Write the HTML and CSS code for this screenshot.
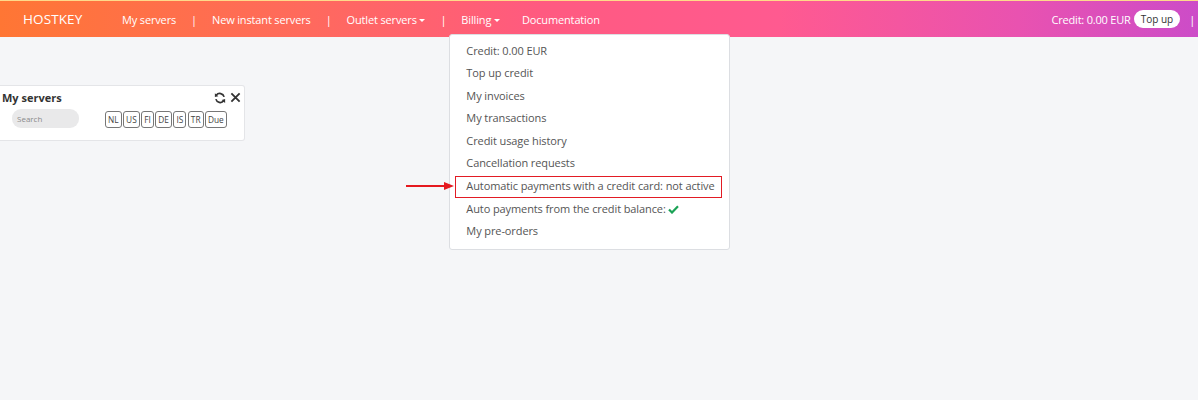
FILE: index.html
```html
<!DOCTYPE html>
<html>
<head>
<meta charset="utf-8">
<link rel="stylesheet" href="styles.css">
</head>
<body>
<header class="navbar">
  <div class="brand">HOSTKEY</div>
  <nav class="nav">
    <span class="nav-item">My servers</span>
    <span class="sep">|</span>
    <span class="nav-item">New instant servers</span>
    <span class="sep">|</span>
    <span class="nav-item">Outlet servers <span class="caret"></span></span>
    <span class="sep">|</span>
    <span class="nav-item billing">Billing <span class="caret"></span>
      <div class="dropdown">
        <div class="dd-item">Credit: 0.00 EUR</div>
        <div class="dd-item">Top up credit</div>
        <div class="dd-item">My invoices</div>
        <div class="dd-item">My transactions</div>
        <div class="dd-item">Credit usage history</div>
        <div class="dd-item">Cancellation requests</div>
        <div class="dd-item highlighted">Automatic payments with a credit card: not active
          <svg class="arrow" width="50" height="10" viewBox="0 0 50 10"><line x1="0" y1="5" x2="40" y2="5" stroke="#e5191f" stroke-width="2"/><polygon points="38,1 48,5 38,9" fill="#e5191f"/></svg>
        </div>
        <div class="dd-item">Auto payments from the credit balance: <svg class="check" width="11" height="9" viewBox="0 0 11 9"><path d="M1 4.5 L4 7.5 L10 1.2" fill="none" stroke="#1aa255" stroke-width="2.2"/></svg></div>
        <div class="dd-item">My pre-orders</div>
      </div>
    </span>
    <span class="nav-item doc">Documentation</span>
  </nav>
  <div class="right">
    <span class="credit">Credit: 0.00 EUR</span>
    <span class="topup">Top up</span>
    <span class="sep-r">|</span>
  </div>
</header>
<main class="content">
  <section class="widget">
    <div class="widget-head">
      <span class="widget-title">My servers</span>
      <span class="widget-icons">
        <svg width="12" height="12" viewBox="0 0 16 16"><path d="M13.5 6.5A6 6 0 0 0 3 4.2" fill="none" stroke="#333" stroke-width="2.2"/><polygon points="1.2,1.5 5.8,5.5 1.2,6.8" fill="#333"/><path d="M2.5 9.5A6 6 0 0 0 13 11.8" fill="none" stroke="#333" stroke-width="2.2"/><polygon points="14.8,14.5 10.2,10.5 14.8,9.2" fill="#333"/></svg>
        <svg width="11" height="11" viewBox="0 0 12 12"><path d="M1.5 1.5L10.5 10.5M10.5 1.5L1.5 10.5" stroke="#333" stroke-width="2"/></svg>
      </span>
    </div>
    <div class="widget-body">
      <div class="search">Search</div>
      <div class="tags">
        <span class="tag">NL</span><span class="tag">US</span><span class="tag">FI</span><span class="tag">DE</span><span class="tag">IS</span><span class="tag">TR</span><span class="tag">Due</span>
      </div>
    </div>
  </section>
</main>
</body>
</html>
```
FILE: styles.css
```css
* { box-sizing: border-box; }
html, body { margin: 0; padding: 0; }
body {
  width: 1198px;
  height: 400px;
  background: #f5f6f8;
  font-family: "Open Sans", "Noto Sans", sans-serif;
  overflow: hidden;
}
.navbar {
  height: 37px;
  display: flex;
  align-items: center;
  color: #fff;
  border-top: 1px solid #ffd98a;
  background: linear-gradient(90deg, #ff7634 0%, #ff6a5c 25%, #ff5a80 45%, #ff5a90 65%, #e952b0 85%, #cc4cc8 100%);
  position: relative;
}
.brand {
  margin-left: 23px;
  font-size: 13.5px;
  letter-spacing: 0.1px;
  width: 99px;
}
.nav {
  display: flex;
  align-items: center;
  font-size: 11px;
  letter-spacing: -0.15px;
}
.nav-item { position: relative; white-space: nowrap; }
.sep { margin: 0 15px 0 15px; }
.doc { margin-left: 22px; }
.caret {
  display: inline-block;
  width: 0; height: 0;
  border-left: 3px solid transparent;
  border-right: 3px solid transparent;
  border-top: 3.5px solid #fff;
  vertical-align: 2px;
  margin-left: 0;
}
.right {
  margin-left: auto;
  display: flex;
  align-items: center;
  font-size: 11px;
  letter-spacing: -0.2px;
}
.topup {
  background: #fff;
  color: #333;
  border-radius: 10px;
  font-size: 10px;
  padding: 2px 7px;
  margin-left: 3px;
  letter-spacing: 0;
}
.sep-r { margin-left: 9px; margin-right: 3px; }
.dropdown {
  position: absolute;
  top: 22px;
  left: -12px;
  width: 281px;
  background: #fff;
  border: 1px solid #dcdee2;
  border-radius: 3px;
  padding: 5px 0 6px;
  color: #555;
  font-size: 11px;
  letter-spacing: -0.1px;
  z-index: 10;
}
.dd-item {
  height: 22.6px;
  line-height: 22.6px;
  padding-left: 16px;
  position: relative;
}
.dd-item.highlighted::before {
  content: "";
  position: absolute;
  left: 5px;
  top: 1px;
  width: 265px;
  height: 20px;
  border: 1.5px solid #e21b24;
}
.arrow {
  position: absolute;
  left: -44px;
  top: 6px;
}
.check { vertical-align: -1px; }
.content { padding-top: 48px; }
.widget {
  width: 245px;
  height: 56px;
  background: #fff;
  border: 1px solid #e4e5e8;
  border-left: none;
  border-radius: 0 3px 3px 0;
  padding: 4px 3px 0 2px;
}
.widget-head {
  display: flex;
  align-items: center;
  justify-content: space-between;
}
.widget-title {
  font-weight: 700;
  font-size: 11px;
  color: #333;
}
.widget-icons { display: flex; gap: 4px; align-items: center; }
.widget-body {
  display: flex;
  align-items: center;
  margin-top: 4px;
}
.search {
  margin-left: 10px;
  width: 67px;
  height: 19px;
  border-radius: 9px;
  background: #e9e9ea;
  color: #8a8a8a;
  font-size: 8px;
  line-height: 19px;
  padding-left: 5px;
}
.tags {
  display: flex;
  gap: 1.5px;
  margin-left: 26px;
  margin-top: 2px;
}
.tag {
  border: 1px solid #777;
  border-radius: 3px;
  font-size: 8.3px;
  color: #444;
  height: 17px;
  line-height: 15px;
  padding: 0 2px;
}
```
